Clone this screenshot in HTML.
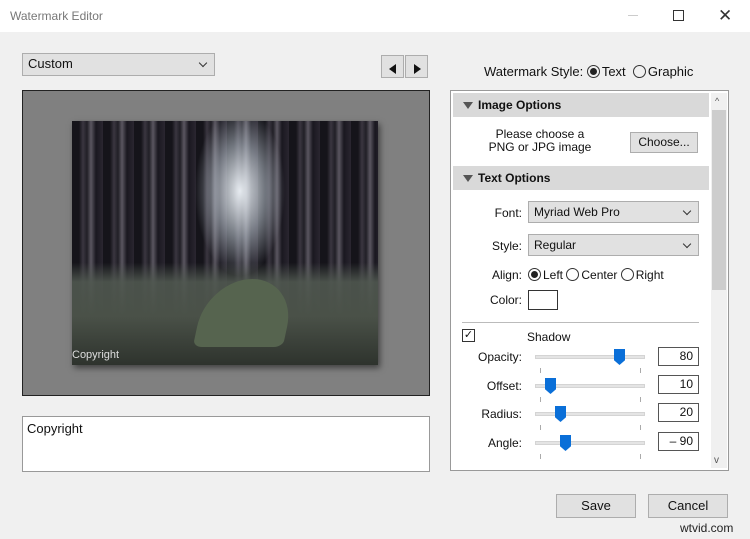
<!DOCTYPE html>
<html><head><style>
*{box-sizing:border-box;margin:0;padding:0}
body{width:750px;height:539px;background:#f0f0f0;font-family:"Liberation Sans",sans-serif;font-size:12px;color:#111;position:relative;overflow:hidden}
.a{position:absolute}
.dd{position:absolute;background:#e1e1e1;border:1px solid #adadad;padding-left:5px;line-height:20px}
.dd:after{content:"";position:absolute;right:8px;top:6px;width:5px;height:5px;border-right:1px solid #333;border-bottom:1px solid #333;transform:rotate(45deg)}
.hdr{position:absolute;left:453px;width:256px;height:24px;background:#d9d9d9;font-weight:bold;font-size:12px;line-height:24px;padding-left:25px}
.hdr:before{content:"";position:absolute;left:10px;top:9px;border-left:5px solid transparent;border-right:5px solid transparent;border-top:7px solid #555}
.lbl{position:absolute;text-align:right;width:80px}
.track{position:absolute;left:535px;width:110px;height:4px;background:#e4e4e4;border:1px solid #d4d4d4}
.th{position:absolute;width:11px;height:16px;background:#0a6fd8;clip-path:polygon(0 0,100% 0,100% 70%,50% 100%,0 70%)}
.tk{position:absolute;width:1px;height:5px;background:#aaa}
.box{position:absolute;left:658px;width:41px;height:19px;background:#fff;border:1px solid #555;text-align:right;padding-right:5px;line-height:17px}
.btn{position:absolute;background:#e1e1e1;border:1px solid #adadad;text-align:center}
.rad{display:inline-block;width:13px;height:13px;border:1px solid #333;border-radius:50%;vertical-align:-2px;position:relative;margin-right:2px}
.rad.on:after{content:"";position:absolute;left:2px;top:2px;width:7px;height:7px;border-radius:50%;background:#222}
.tri{position:absolute;top:8px;border-top:5px solid transparent;border-bottom:5px solid transparent}
</style></head><body>
<div class="a" style="left:0;top:0;width:750px;height:32px;background:#fff"></div>
<div class="a" style="left:10px;top:9px;color:#777;font-size:12px">Watermark Editor</div>
<div class="a" style="left:628px;top:15px;width:10px;height:1px;background:#ccc"></div>
<div class="a" style="left:673px;top:10px;width:11px;height:11px;border:1px solid #333"></div>
<div class="a" style="left:718px;top:6px;font-size:17px;color:#333">✕</div>

<div class="dd" style="left:22px;top:53px;width:193px;height:23px;font-size:13px">Custom</div>
<div class="btn" style="left:381px;top:55px;width:23px;height:23px"><div class="tri" style="left:7px;border-right:7px solid #111"></div></div>
<div class="btn" style="left:405px;top:55px;width:23px;height:23px"><div class="tri" style="left:8px;border-left:7px solid #111"></div></div>

<div class="a" style="left:484px;top:64px;font-size:13px">Watermark Style: <span class="rad on"></span>Text &nbsp;<span class="rad"></span>Graphic</div>

<div class="a" style="left:22px;top:90px;width:408px;height:306px;background:#808080;border:1px solid #222"></div>
<div class="a" style="left:72px;top:121px;width:306px;height:244px;box-shadow:2px 3px 6px rgba(0,0,0,.5);overflow:hidden;background:
radial-gradient(ellipse 45px 85px at 168px 70px,rgba(240,245,250,.95),rgba(190,200,210,.55) 55%,transparent),
linear-gradient(180deg,transparent 58%,rgba(80,88,80,.9) 66%,#4a5148 80%,#2e332d),
repeating-linear-gradient(90deg,#15141a 0 7px,#3a3640 11px,#211f26 15px,#5a5660 19px,#1a1820 24px,#2a2630 31px),#222">
<div class="a" style="left:128px;top:158px;width:90px;height:68px;background:#56644f;border-radius:50% 50% 10% 10%/70% 70% 10% 10%;transform:skewX(-12deg)"></div>
<div class="a" style="left:0;top:228px;color:#ddd;font-size:11px">Copyright</div>
</div>

<div class="a" style="left:22px;top:416px;width:408px;height:56px;background:#fff;border:1px solid #999;padding:4px;font-size:13px">Copyright</div>

<div class="a" style="left:450px;top:90px;width:279px;height:381px;background:#fff;border:1px solid #999"></div>
<div class="a" style="left:711px;top:93px;width:16px;height:375px;background:#f0f0f0"></div>
<div class="a" style="left:712px;top:110px;width:14px;height:180px;background:#cdcdcd"></div>
<div class="a" style="left:715px;top:96px;font-size:9px;color:#555">^</div>
<div class="a" style="left:714px;top:455px;font-size:10px;color:#555">v</div>

<div class="hdr" style="top:93px">Image Options</div>
<div class="a" style="left:480px;top:128px;width:120px;text-align:center;line-height:13px">Please choose a<br>PNG or JPG image</div>
<div class="btn" style="left:630px;top:132px;width:68px;height:21px;line-height:19px">Choose...</div>
<div class="hdr" style="top:166px">Text Options</div>
<div class="lbl" style="left:442px;top:206px">Font:</div>
<div class="dd" style="left:528px;top:201px;width:171px;height:22px">Myriad Web Pro</div>
<div class="lbl" style="left:442px;top:239px">Style:</div>
<div class="dd" style="left:528px;top:234px;width:171px;height:22px">Regular</div>
<div class="lbl" style="left:442px;top:268px">Align:</div>
<div class="a" style="left:528px;top:268px"><span class="rad on"></span>Left <span class="rad"></span>Center <span class="rad"></span>Right</div>
<div class="lbl" style="left:442px;top:293px">Color:</div>
<div class="a" style="left:528px;top:290px;width:30px;height:20px;border:1px solid #333;background:#fff"></div>
<div class="a" style="left:462px;top:322px;width:237px;height:1px;background:#bbb"></div>
<div class="a" style="left:462px;top:329px;width:13px;height:13px;border:1px solid #333;font-size:11px;line-height:10px;text-align:center">✓</div>
<div class="a" style="left:527px;top:330px">Shadow</div>

<div class="lbl" style="left:442px;top:350px">Opacity:</div>
<div class="track" style="top:355px"></div><div class="th" style="left:614px;top:349px"></div>
<div class="tk" style="left:540px;top:368px"></div><div class="tk" style="left:640px;top:368px"></div>
<div class="box" style="top:347px">80</div>

<div class="lbl" style="left:442px;top:379px">Offset:</div>
<div class="track" style="top:384px"></div><div class="th" style="left:545px;top:378px"></div>
<div class="tk" style="left:540px;top:397px"></div><div class="tk" style="left:640px;top:397px"></div>
<div class="box" style="top:375px">10</div>

<div class="lbl" style="left:442px;top:407px">Radius:</div>
<div class="track" style="top:412px"></div><div class="th" style="left:555px;top:406px"></div>
<div class="tk" style="left:540px;top:425px"></div><div class="tk" style="left:640px;top:425px"></div>
<div class="box" style="top:403px">20</div>

<div class="lbl" style="left:442px;top:436px">Angle:</div>
<div class="track" style="top:441px"></div><div class="th" style="left:560px;top:435px"></div>
<div class="tk" style="left:540px;top:454px"></div><div class="tk" style="left:640px;top:454px"></div>
<div class="box" style="top:432px">– 90</div>

<div class="btn" style="left:556px;top:494px;width:80px;height:24px;line-height:22px;font-size:13px">Save</div>
<div class="btn" style="left:648px;top:494px;width:80px;height:24px;line-height:22px;font-size:13px">Cancel</div>
<div class="a" style="left:680px;top:521px;font-size:12px;color:#222">wtvid.com</div>
</body></html>
